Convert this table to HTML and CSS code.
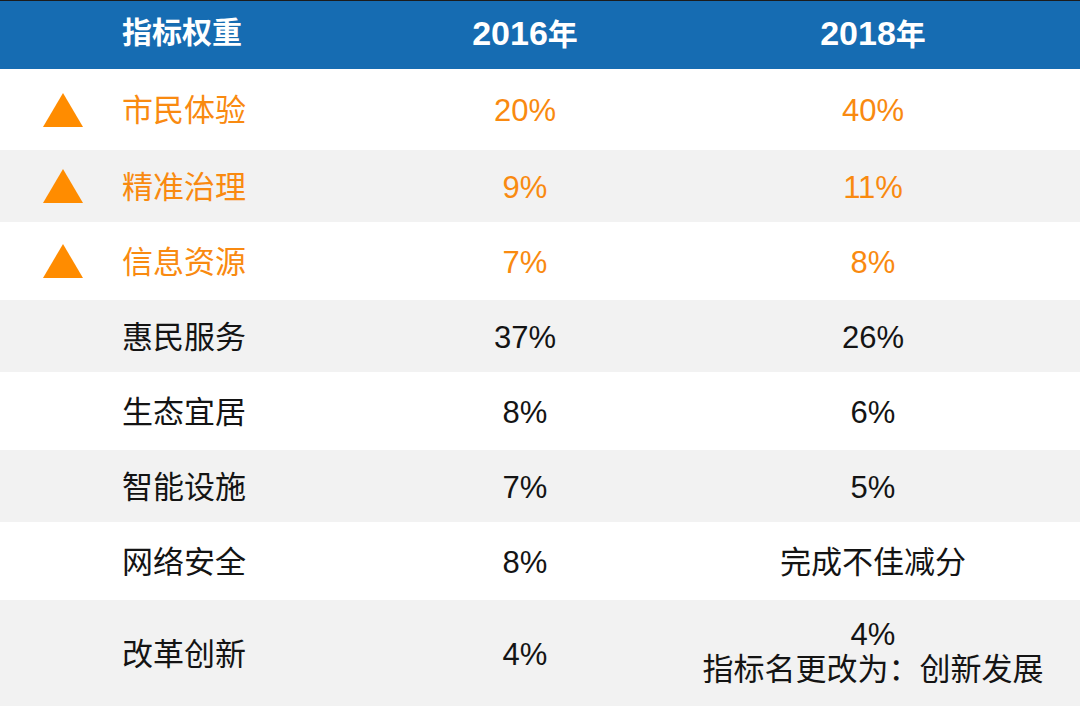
FILE: index.html
```html
<!DOCTYPE html>
<html lang="zh-CN">
<head>
<meta charset="utf-8">
<title>指标权重</title>
<link rel="stylesheet" href="styles.css">
</head>
<body>
<div class="table">
  <div class="row head">
    <div class="mark"></div>
    <div class="name">指标权重</div>
    <div class="val"><span class="num">2016</span>年</div>
    <div class="val"><span class="num">2018</span>年</div>
  </div>
  <div class="row hl r-first">
    <div class="mark"><span class="tri"></span></div>
    <div class="name">市民体验</div>
    <div class="val">20%</div>
    <div class="val">40%</div>
  </div>
  <div class="row hl alt">
    <div class="mark"><span class="tri"></span></div>
    <div class="name">精准治理</div>
    <div class="val">9%</div>
    <div class="val">11%</div>
  </div>
  <div class="row hl">
    <div class="mark"><span class="tri"></span></div>
    <div class="name">信息资源</div>
    <div class="val">7%</div>
    <div class="val">8%</div>
  </div>
  <div class="row alt">
    <div class="mark"></div>
    <div class="name">惠民服务</div>
    <div class="val">37%</div>
    <div class="val">26%</div>
  </div>
  <div class="row">
    <div class="mark"></div>
    <div class="name">生态宜居</div>
    <div class="val">8%</div>
    <div class="val">6%</div>
  </div>
  <div class="row alt">
    <div class="mark"></div>
    <div class="name">智能设施</div>
    <div class="val">7%</div>
    <div class="val">5%</div>
  </div>
  <div class="row">
    <div class="mark"></div>
    <div class="name">网络安全</div>
    <div class="val">8%</div>
    <div class="val">完成不佳减分</div>
  </div>
  <div class="row alt r-last">
    <div class="mark"></div>
    <div class="name">改革创新</div>
    <div class="val">4%</div>
    <div class="val multi"><span>4%</span><span>指标名更改为：创新发展</span></div>
  </div>
</div>
</body>
</html>
```

FILE: styles.css
```css
* { box-sizing: border-box; }
html, body {
  margin: 0;
  padding: 0;
  background: #ffffff;
}
body {
  width: 1080px;
  height: 706px;
  overflow: hidden;
  font-family: "Liberation Sans", "Noto Sans CJK SC", sans-serif;
  font-size: 31px;
  color: #141414;
}
.table {
  display: flex;
  flex-direction: column;
}
.row {
  display: grid;
  grid-template-columns: 122px 228px 350px 346px;
  align-items: center;
  height: 78px;
  background: #ffffff;
}
.row.alt {
  background: #f2f2f2;
  height: 72px;
}
.row.head {
  height: 69px;
  background: #166cb2;
  border-top: 1px solid #1c1c1c;
  padding-bottom: 5px;
  color: #ffffff;
  font-weight: bold;
  font-size: 30px;
}
.head .num { font-size: 34px; }
.row.r-first { height: 81px; }
.row.r-last { height: 106px; }
.row.hl { color: #f98a10; }
.mark {
  display: flex;
  justify-content: center;
  align-items: center;
  padding-left: 4px;
}
.tri {
  width: 0;
  height: 0;
  border-left: 20px solid transparent;
  border-right: 20px solid transparent;
  border-bottom: 34px solid #ff8c00;
}
.name {
  line-height: 1;
  padding-top: 2px;
}
.val {
  text-align: center;
  line-height: 1;
  padding-top: 2px;
}
.head .name, .head .val { padding-top: 0; }
.multi {
  display: flex;
  flex-direction: column;
  align-items: center;
  line-height: 35px;
  padding-top: 0;
  padding-bottom: 2px;
}
```
